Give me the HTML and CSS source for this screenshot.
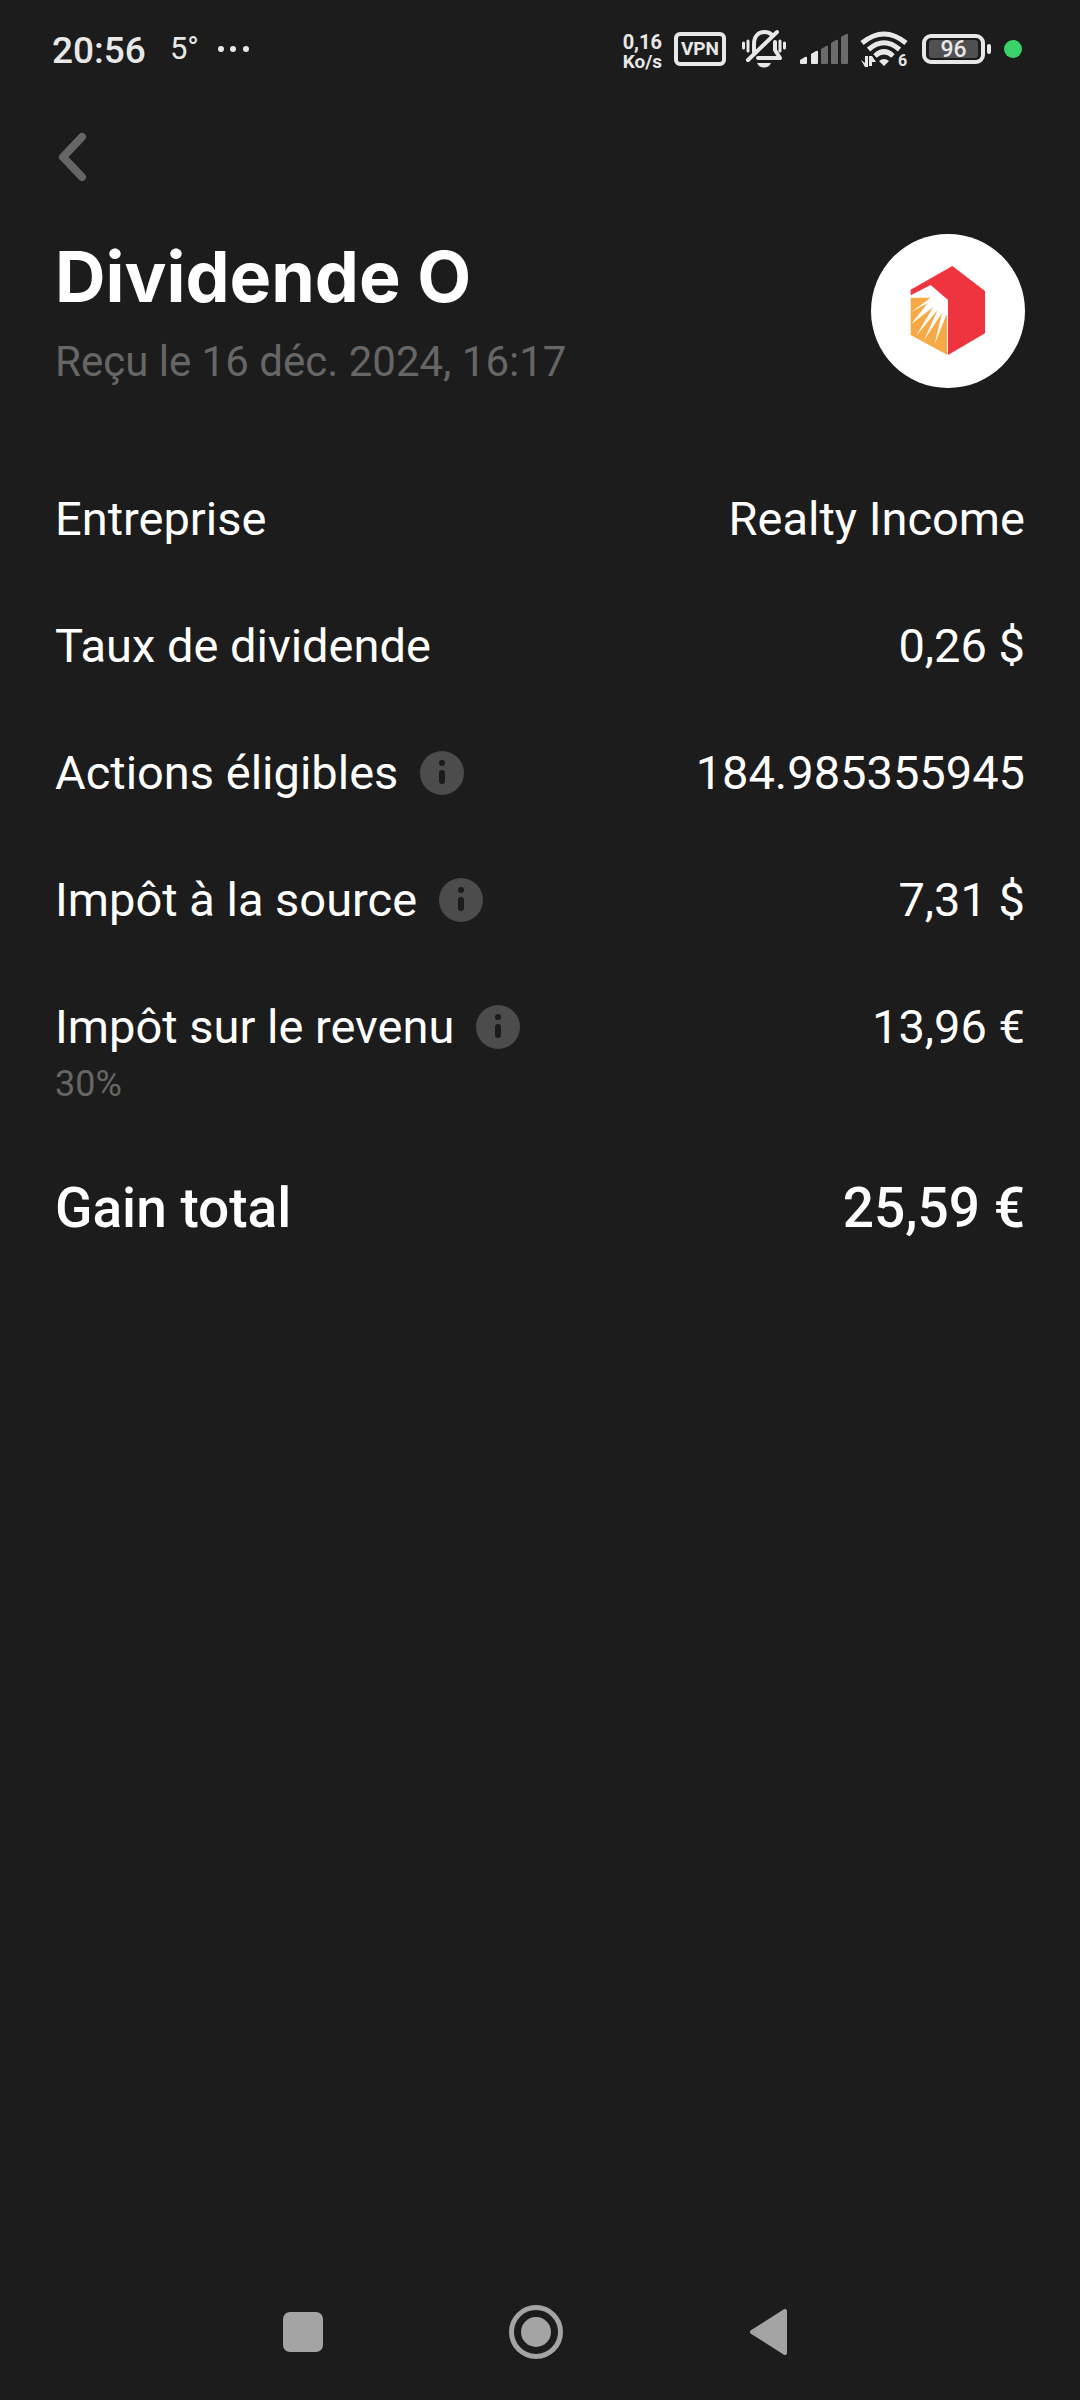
FILE: index.html
```html
<!DOCTYPE html>
<html lang="fr">
<head>
<meta charset="utf-8">
<meta name="viewport" content="width=device-width, initial-scale=1">
<title>Dividende O</title>
<link rel="stylesheet" href="styles.css">
</head>
<body>
<header class="status">
  <div class="status-left">
    <time class="clock">20:56</time>
    <span class="temp">5°</span>
    <svg class="dots" width="32" height="8" viewBox="0 0 32 8" fill="currentColor" aria-hidden="true"><circle cx="4" cy="4" r="3"/><circle cx="16" cy="4" r="3"/><circle cx="29" cy="4" r="3"/></svg>
  </div>
  <div class="status-right">
    <div class="speed"><span class="speed-value">0,16</span><span class="speed-unit">Ko/s</span></div>
    <span class="vpn">VPN</span>
    <svg class="bell" width="46" height="40" viewBox="0 0 46 40" fill="none" stroke="currentColor" stroke-linecap="round" aria-hidden="true">
      <path stroke-width="3" d="M2.500 14v5M7 12v10M39 12v10M43.500 14v5"/>
      <path stroke-width="4" stroke-linejoin="round" d="M13 23V15C13 7 17.500 3 23.500 3Q28 3 30.500 5.500M34 13v8l5 8H17"/>
      <path stroke-width="4" d="M7 31L36 3"/>
      <path fill="currentColor" stroke="none" d="M16 34H30Q28 38.500 23 38.500T16 34Z"/>
    </svg>
    <svg class="signal" width="48" height="32" viewBox="0 0 48 32" fill="currentColor" aria-hidden="true">
      <path d="M0 27l5-3q2-1 2 1v5q0 1-1 1H1q-1 0-1-1ZM11 21l5-3q2-1 2 1v11q0 1-1 1h-5q-1 0-1-1Z"/>
      <path fill="#6b6b6b" d="M21 16l5-3q2-1 2 1v16q0 1-1 1h-5q-1 0-1-1ZM31 10l5-3q2-1 2 1v22q0 1-1 1h-5q-1 0-1-1ZM41 4l5-3q2-1 2 1v28q0 1-1 1h-5q-1 0-1-1Z"/>
    </svg>
    <svg class="wifi" width="48" height="36" viewBox="0 0 48 36" fill="none" stroke="currentColor" aria-hidden="true">
      <path stroke-width="5" d="M2 12Q24-6 46 12M8.500 18.500Q24 5 39.500 18.500M15 25Q24 16.500 33 25"/>
      <path fill="currentColor" stroke="none" d="M19 30q5-4 10 0l-5 5ZM1 29l4 3v-7h3v11H5ZM9 25h3l4 6h-4v4H9Z"/>
      <text class="wifi-gen" x="38" y="35">6</text>
    </svg>
    <div class="battery"><span class="battery-body"><span class="battery-level">96</span></span><span class="battery-tip"></span></div>
    <span class="privacy-dot"></span>
  </div>
</header>

<main class="page">
  <button class="back" type="button" aria-label="Retour">
    <svg width="36" height="54" viewBox="0 0 36 54" fill="none" stroke="currentColor" stroke-width="8" stroke-linecap="round" stroke-linejoin="round"><path d="M27 7L8 27L27 47"/></svg>
  </button>

  <section class="heading">
    <div class="heading-text">
      <h1 class="title">Dividende O</h1>
      <p class="subtitle">Reçu le 16 déc. 2024, 16:17</p>
    </div>
    <svg class="logo" viewBox="63 42 462 462" role="img" aria-label="Realty Income">
      <circle cx="294" cy="273" r="231" fill="#fff"/>
      <path fill="#ee343f" d="M182 209L307 138L405 213V340L294 405V240L242 195L182 226Z"/>
      <path fill="#f7a945" d="M182 233H240L291 280V404L182 345Z"/>
      <path fill="#fff" d="M238 236L184 276L233 249L184 312L249 262L198 348L263 270L222 361L276 279L253 376L289 285L294 288V240L250 220Z"/>
    </svg>
  </section>

  <dl class="details">
    <div class="row"><dt>Entreprise</dt><dd>Realty Income</dd></div>
    <div class="row"><dt>Taux de dividende</dt><dd>0,26 $</dd></div>
    <div class="row"><dt>Actions éligibles
      <button class="info" type="button" aria-label="Informations sur les actions éligibles"><svg viewBox="0 0 44 44"><circle cx="22" cy="22" r="22" fill="#4c4c4c"/><circle cx="22" cy="12" r="3" fill="#1c1c1c"/><rect x="19" y="19" width="6" height="14" rx="3" fill="#1c1c1c"/></svg></button></dt><dd>184.985355945</dd></div>
    <div class="row"><dt>Impôt à la source
      <button class="info" type="button" aria-label="Informations sur l’impôt à la source"><svg viewBox="0 0 44 44"><circle cx="22" cy="22" r="22" fill="#4c4c4c"/><circle cx="22" cy="12" r="3" fill="#1c1c1c"/><rect x="19" y="19" width="6" height="14" rx="3" fill="#1c1c1c"/></svg></button></dt><dd>7,31 $</dd></div>
    <div class="row"><dt>Impôt sur le revenu
      <button class="info" type="button" aria-label="Informations sur l’impôt sur le revenu"><svg viewBox="0 0 44 44"><circle cx="22" cy="22" r="22" fill="#4c4c4c"/><circle cx="22" cy="12" r="3" fill="#1c1c1c"/><rect x="19" y="19" width="6" height="14" rx="3" fill="#1c1c1c"/></svg></button></dt><dd>13,96 €</dd><dd class="rate">30%</dd></div>
    <div class="row total"><dt>Gain total</dt><dd>25,59 €</dd></div>
  </dl>
</main>

<nav class="system-nav" aria-label="Navigation système">
  <button type="button" aria-label="Applications récentes"><svg width="56" height="56" viewBox="0 0 56 56" fill="currentColor"><rect x="8" y="8" width="40" height="40" rx="7"/></svg></button>
  <button type="button" aria-label="Accueil"><svg width="56" height="56" viewBox="0 0 56 56" fill="currentColor"><circle cx="28" cy="28" r="24.500" fill="none" stroke="currentColor" stroke-width="5"/><circle cx="28" cy="28" r="15"/></svg></button>
  <button type="button" aria-label="Précédent"><svg width="56" height="56" viewBox="0 0 56 56" fill="currentColor" stroke="currentColor" stroke-width="4" stroke-linejoin="round"><path d="M11 28L44 7V49Z"/></svg></button>
</nav>
</body>
</html>
```
FILE: styles.css
```css
* { box-sizing: border-box; }

body {
  margin: 0;
  min-height: 100vh;
  display: flex;
  flex-direction: column;
  background: #1c1c1c;
  color: #fff;
  font-family: Roboto, "Liberation Sans", sans-serif;
}

h1, p, dl, dd { margin: 0; }

button {
  padding: 0;
  border: 0;
  background: none;
  color: inherit;
  font: inherit;
  cursor: pointer;
}

svg { display: block; flex: none; overflow: visible; }

/* System status bar */
.status {
  display: flex;
  justify-content: space-between;
  align-items: center;
  height: 98px;
  padding: 0 58px 0 52px;
  color: #e8e8e8;
}

.status-left,
.status-right { display: flex; align-items: center; }

.clock { padding-top: 3px; font-size: 37px; line-height: 44px; font-weight: 500; }
.temp { margin-left: 24px; font-size: 31px; line-height: 40px; }
.dots { margin-left: 18px; }

.speed {
  display: flex;
  flex-direction: column;
  padding-top: 6px;
  font-weight: 700;
  font-size: 19px;
  line-height: 19px;
}
.speed-value { font-size: 20px; }

.vpn {
  margin-left: 12px;
  width: 52px;
  height: 34px;
  border: 4px solid;
  border-radius: 6px;
  font-size: 19px;
  line-height: 26px;
  font-weight: 700;
  text-align: center;
}

.bell { margin-left: 15px; }
.signal { margin-left: 13px; }
.wifi { margin-left: 12px; }
.wifi-gen { font-size: 16px; font-weight: 700; fill: currentColor; stroke: none; }

.battery { display: flex; align-items: center; gap: 2px; margin-left: 14px; }
.battery-body {
  width: 63px;
  height: 30px;
  padding: 2px 3px;
  border: 4px solid;
  border-radius: 9px;
}
.battery-level {
  display: block;
  height: 18px;
  border-radius: 3px;
  background: #505050;
  font-size: 23px;
  line-height: 20px;
  font-weight: 500;
  text-align: center;
}
.battery-tip { width: 4px; height: 10px; border-radius: 2px; background: currentColor; }

.privacy-dot {
  margin-left: 13px;
  width: 18px;
  height: 18px;
  border-radius: 50%;
  background: #3ad36a;
}

/* Transaction detail */
.page { padding: 32px 55px 0; }

.back { display: block; color: #666; }

.heading {
  display: flex;
  justify-content: space-between;
  margin-top: 50px;
}

.title {
  font-family: Inter, "Open Sans", sans-serif;
  font-size: 70px;
  line-height: 86px;
  font-weight: 700;
}
.subtitle {
  margin-top: 17px;
  color: #666;
  font-size: 42px;
  line-height: 50px;
}

.logo { width: 154px; height: 154px; }

.details {
  display: flex;
  flex-direction: column;
  gap: 71px;
  margin-top: 103px;
  font-size: 47px;
  line-height: 56px;
}

.row {
  display: flex;
  flex-wrap: wrap;
  justify-content: space-between;
}
.row dt { display: flex; align-items: center; gap: 22px; }

.info { width: 44px; height: 44px; }

.rate {
  flex-basis: 100%;
  color: #666;
  font-size: 36px;
  line-height: 46px;
  padding-top: 6px;
}

.total {
  font-size: 55px;
  line-height: 60px;
  font-weight: 500;
}

/* System navigation */
.system-nav {
  display: flex;
  justify-content: center;
  gap: 177px;
  margin-top: auto;
  padding: 40px 8px 40px 0;
  color: #a4a4a4;
}
```
